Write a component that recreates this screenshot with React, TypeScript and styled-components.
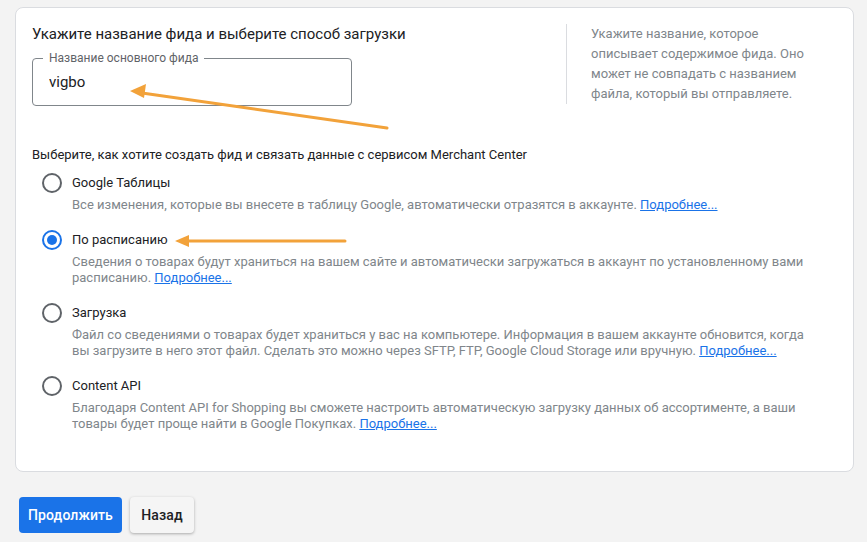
import React from 'react';
import styled, { createGlobalStyle } from 'styled-components';

const Global = createGlobalStyle`
    body {
        margin:0;
        background:#f3f3f3;
        font-family:Roboto, "Noto Sans", Arial, sans-serif;
    }
`;

const Page = styled.div`
    position:relative;
    width:867px;
    height:542px;
    padding:7px 0 0 15px;
    box-sizing:border-box;
    overflow:hidden;
`;

const Card = styled.div`
    width:839px;
    box-sizing:border-box;
    background:white;
    border:1px solid #dadce0;
    border-radius:8px;
    padding:16px 16px 39px 16px;
`;

const Top = styled.div`
    display:flex;
`;

const Left = styled.div`
    width:534px;
`;

const Title = styled.div`
    font-size:15px;
    line-height:20px;
    color:#202124;
`;

const Field = styled.div`
    position:relative;
    margin-top:14px;
    width:320px;
    height:48px;
    box-sizing:border-box;
    border:1px solid #80868b;
    border-radius:4px;
`;

const FieldLabel = styled.span`
    position:absolute;
    top:-8px;
    left:10px;
    padding:0 6px;
    background:white;
    font-size:12px;
    line-height:14px;
    color:#5f6368;
`;

const FieldInput = styled.input`
    width:100%;
    height:100%;
    box-sizing:border-box;
    border:0;
    outline:none;
    background:transparent;
    padding:0 16px;
    font-family:inherit;
    font-size:15px;
    color:#202124;
`;

const Hint = styled.div`
    width:271px;
    box-sizing:border-box;
    border-left:1px solid #dadce0;
    padding:0 24px;
    font-size:13px;
    line-height:20px;
    color:#80868b;
    align-self:flex-start;
`;

const Question = styled.div`
    margin-top:41px;
    font-size:13px;
    line-height:16px;
    color:#202124;
`;

const Options = styled.div`
    margin-top:10px;
    display:flex;
    flex-direction:column;
    gap:17px;
`;

const Option = styled.label`
    display:flex;
    gap:10px;
    padding-left:10px;
    cursor:pointer;
`;

const Radio = styled.span<{ $on?: boolean }>`
    flex:none;
    width:20px;
    height:20px;
    box-sizing:border-box;
    border-radius:50%;
    border:2px solid ${p => (p.$on ? '#1a73e8' : '#5f6368')};
    display:flex;
    align-items:center;
    justify-content:center;

    &::after {
        content:'';
        display:${p => (p.$on ? 'block' : 'none')};
        width:10px;
        height:10px;
        border-radius:50%;
        background:#1a73e8;
    }
`;

const Body = styled.div`
    max-width:745px;
`;

const Name = styled.div`
    font-size:13px;
    line-height:20px;
    color:#202124;
`;

const Desc = styled.div`
    margin-top:4px;
    font-size:13px;
    line-height:16px;
    color:#80868b;
`;

const More = styled.a`
    color:#1a73e8;
    text-decoration:underline;
`;

const Actions = styled.div`
    display:flex;
    gap:8px;
    margin:25px 0 0 4px;
`;

const Button = styled.button<{ $primary?: boolean }>`
    height:36px;
    min-width:${p => (p.$primary ? '103px' : '64px')};
    padding:0 8px;
    border:0;
    border-radius:4px;
    font-family:inherit;
    font-size:14px;
    font-weight:500;
    letter-spacing:0.1px;
    color:${p => (p.$primary ? 'white' : '#202124')};
    background:${p => (p.$primary ? '#1a73e8' : '#f5f5f5')};
    box-shadow:${p => (p.$primary ? 'none' : '0 1px 3px rgba(0,0,0,0.3)')};
    cursor:pointer;
`;

const Arrows = styled.svg`
    position:absolute;
    top:0;
    left:0;
    pointer-events:none;
`;

const options = [
    {
        name: 'Google Таблицы',
        desc: 'Все изменения, которые вы внесете в таблицу Google, автоматически отразятся в аккаунте.',
    },
    {
        name: 'По расписанию',
        desc: 'Сведения о товарах будут храниться на вашем сайте и автоматически загружаться в аккаунт по установленному вами расписанию.',
        on: true,
    },
    {
        name: 'Загрузка',
        desc: 'Файл со сведениями о товарах будет храниться у вас на компьютере. Информация в вашем аккаунте обновится, когда вы загрузите в него этот файл. Сделать это можно через SFTP, FTP, Google Cloud Storage или вручную.',
    },
    {
        name: 'Content API',
        desc: 'Благодаря Content API for Shopping вы сможете настроить автоматическую загрузку данных об ассортименте, а ваши товары будет проще найти в Google Покупках.',
    },
];

const App = () => {
    return (
        <Page>
            <Global />
            <Card>
                <Top>
                    <Left>
                        <Title>Укажите название фида и выберите способ загрузки</Title>
                        <Field>
                            <FieldLabel>Название основного фида</FieldLabel>
                            <FieldInput defaultValue="vigbo" />
                        </Field>
                    </Left>
                    <Hint>Укажите название, которое описывает содержимое фида. Оно может не совпадать с названием файла, который вы отправляете.</Hint>
                </Top>
                <Question>Выберите, как хотите создать фид и связать данные с сервисом Merchant Center</Question>
                <Options>
                    {options.map(o => (
                        <Option key={o.name}>
                            <Radio $on={o.on} />
                            <Body>
                                <Name>{o.name}</Name>
                                <Desc>{o.desc} <More href="#">Подробнее...</More></Desc>
                            </Body>
                        </Option>
                    ))}
                </Options>
            </Card>
            <Actions>
                <Button $primary>Продолжить</Button>
                <Button>Назад</Button>
            </Actions>
            <Arrows width="867" height="542" viewBox="0 0 867 542">
                <g stroke="#f2a23a" strokeWidth="3" strokeLinecap="round" fill="#f2a23a">
                    <line x1="387" y1="128" x2="142" y2="93" />
                    <polygon points="130,91 146,84 144,98" stroke="none" />
                    <line x1="345" y1="241" x2="186" y2="241" />
                    <polygon points="175,241 189,235 189,247" stroke="none" />
                </g>
            </Arrows>
        </Page>
    );
};

export default App;
